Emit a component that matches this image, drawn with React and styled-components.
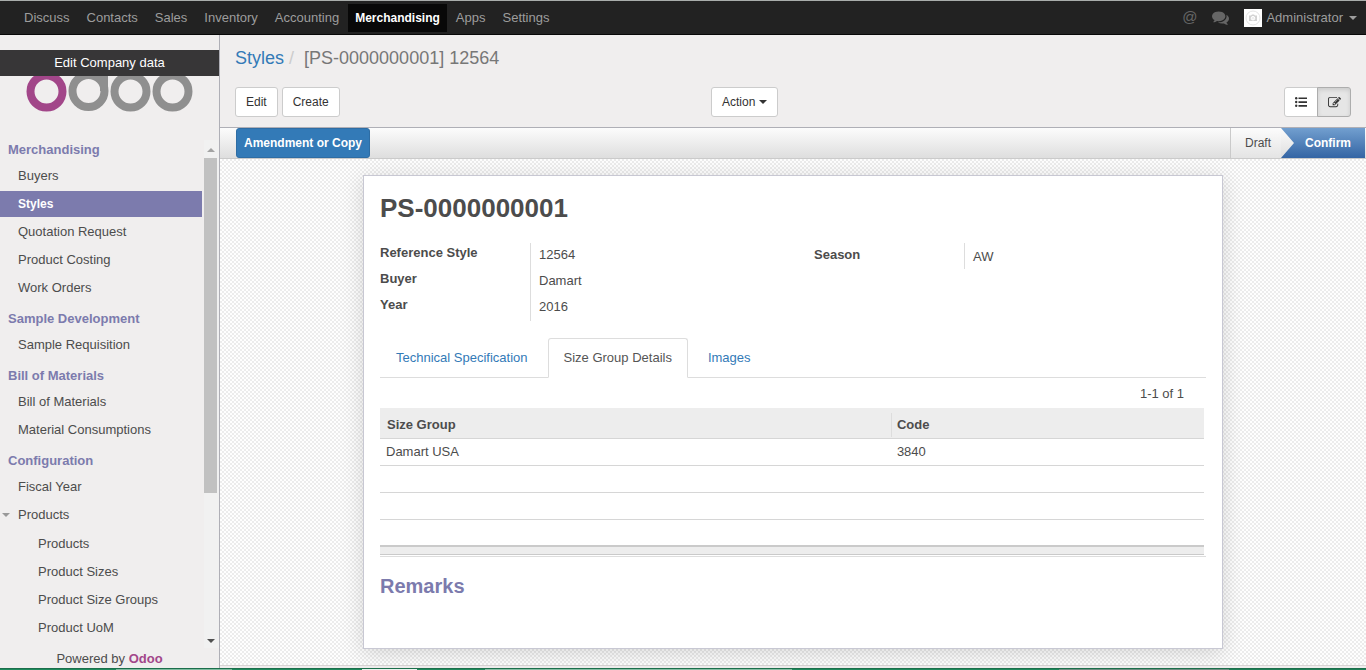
import React from "react";
import styled, { createGlobalStyle } from "styled-components";

const Global = createGlobalStyle`
  * { box-sizing: border-box; }
  body { margin: 0; background: #f0eeee; color: #4c4c4c; font: 13px/18px "Liberation Sans", Arial, sans-serif; }
  button { font: inherit; color: inherit; cursor: pointer; }
  a { color: inherit; text-decoration: none; }
  ul { list-style: none; margin: 0; padding: 0; }
`;

const Page = styled.div`display: flex; flex-direction: column; min-height: 100vh;`;

const TopBar = styled.header`
  display: flex; justify-content: space-between; height: 35px; padding: 1px 9px 0 16px;
  background: #222; border-top: 1px solid #a9adab; border-bottom: 1px solid #080808;
`;
const Menu = styled.nav`display: flex; align-items: center; gap: 1px;`;
const MenuLink = styled.a`
  height: 28px; line-height: 28px; padding: 0 ${(p) => (p.$active ? 7 : 8)}px;
  color: ${(p) => (p.$active ? "#fff" : "#9d9d9d")};
  background: ${(p) => (p.$active ? "#080808" : "transparent")};
  font-weight: ${(p) => (p.$active ? "bold" : "normal")};
  font-size: ${(p) => (p.$active ? 12 : 13)}px;
`;
const UserArea = styled.div`display: flex; align-items: center; color: #9d9d9d;`;
const TopIcon = styled.button`
  display: flex; margin: 0 15px 2px 0; padding: 0; border: 0; background: none; color: #666; font-size: 15px; line-height: 16px;
`;
const UserButton = styled.button`display: flex; align-items: center; gap: 4px; padding: 0; border: 0; background: none;`;
const Caret = styled.span`
  width: 0; height: 0; border: 4px solid transparent; border-top-color: currentColor; border-bottom: 0;
  margin-left: ${(p) => p.$gap || 0}px;
`;

const Body = styled.div`display: flex; flex: 1;`;
const Sidebar = styled.aside`
  width: 220px; flex-shrink: 0; display: flex; flex-direction: column; border-right: 1px solid #afafb6;
`;
const Company = styled.div`display: flex; flex-direction: column; padding-top: 15px; height: 105px;`;
const CompanyLink = styled.a`
  height: 26px; line-height: 26px; text-align: center; color: #fff; background: #373637;
`;
const Logo = styled.svg`display: block; width: 168px; height: 36px; margin-left: 26px;`;
const SideScroll = styled.div`display: flex; flex: 1;`;
const SideMenu = styled.nav`flex: 1; margin-right: 2px;`;
const Section = styled.h4`
  margin: 0; padding: 0 8px; height: 22px; line-height: 20px; font-size: 13px; color: #7c7bad;
`;
const Items = styled.ul`
  display: flex; flex-direction: column; gap: 2px; padding: 1px 0 ${(p) => (p.$last ? 0 : 8)}px;
`;
const ItemLink = styled.a`
  display: flex; align-items: center; height: 26px; padding-left: ${(p) => (p.$nested ? 38 : 18)}px;
  color: ${(p) => (p.$active ? "#fff" : "#4c4c4c")};
  background: ${(p) => (p.$active ? "#7c7bad" : "transparent")};
  font-weight: ${(p) => (p.$active ? "bold" : "normal")};
  font-size: ${(p) => (p.$active ? 12 : 13)}px;
`;
const ParentLink = styled(ItemLink)`
  padding-left: 2px; gap: 8px; color: #4c4c4c; margin-bottom: 1px;
  ${Caret} { color: #999; }
`;
const Scrollbar = styled.div`
  width: 15px; padding-right: 2px; display: flex; flex-direction: column; align-items: center; background: #f1f1f1;
`;
const Arrow = styled.span`
  width: 0; height: 0; margin: ${(p) => (p.$up ? "8px 0 6px" : "auto 0 5px")}; border: 4px solid transparent;
  ${(p) => (p.$up ? "border-top: 0; border-bottom-color: #a3a3a3;" : "border-bottom: 0; border-top-color: #505050;")}
`;
const Thumb = styled.div`width: 100%; height: 335px; background: #c1c1c1;`;
const Powered = styled.footer`
  height: 19px; text-align: center; line-height: 20px; margin-top: 1px;
  a { color: #a24689; font-weight: bold; }
`;

const Main = styled.main`flex: 1; min-width: 0; display: flex; flex-direction: column;`;
const ControlPanel = styled.div`padding: 11px 15px 10px; border-bottom: 1px solid #afafb6;`;
const Crumbs = styled.h1`
  display: flex; margin: 0 0 17px; font-size: 18px; line-height: 24px; font-weight: normal; color: #777;
  a { color: #337ab7; }
  span { color: #ccc; padding: 0 10px 0 5px; }
`;
const Controls = styled.div`display: grid; grid-template-columns: 476px auto 1fr; align-items: center;`;
const ButtonRow = styled.div`
  display: flex; gap: ${(p) => (p.$joined ? 0 : 4)}px;
  justify-content: ${(p) => (p.$end ? "flex-end" : "flex-start")};
`;
const Button = styled.button`
  display: flex; align-items: center; height: 30px; padding: 0 10px; font-size: 12px;
  color: #333; background: #fff; border: 1px solid #ccc; border-radius: 3px;
`;
const ViewButton = styled(Button)`
  width: 34px; justify-content: center; padding: 0;
  ${(p) => (p.$active
    ? "background: #e6e6e6; border-color: #adadad; border-radius: 0 3px 3px 0; box-shadow: inset 0 2px 4px rgba(0,0,0,.12); margin-left: -1px;"
    : "border-radius: 3px 0 0 3px;")}
`;

const StatusBar = styled.div`
  display: flex; justify-content: space-between; height: 31px; padding: 0 1px 0 16px;
  border-bottom: 1px solid #cacaca; background: linear-gradient(#fcfcfc, #dedede);
`;
const Primary = styled.button`
  height: 30px; padding: 0 7px; font-size: 12px; font-weight: bold; color: #fff;
  background: #337ab7; border: 1px solid #2e6da4; border-radius: 3px;
`;
const Steps = styled.ol`display: flex; margin: 0; padding: 0; list-style: none;`;
const Step = styled.li`
  display: flex; align-items: center; font-size: 12px; line-height: 28px;
  ${(p) => (p.$active
    ? "color: #fff; font-weight: bold; padding: 0 14px 0 24px; background: linear-gradient(#729fcf, #3465a4); clip-path: polygon(0 0, 100% 0, 100% 100%, 0 100%, 13px 50%);"
    : "padding: 0 10px 0 14px; border-left: 1px solid #cacaca; background: linear-gradient(#fcfcfc, #e4e4e4);")}
`;

const Canvas = styled.div`
  flex: 1; padding: 16px 143px; border-bottom: 1px solid #d8d4d4; margin-bottom: 2px;
  background: repeating-conic-gradient(#ececec 0 25%, #fefefe 0 50%) 0 0 / 4px 4px;
`;
const Sheet = styled.article`
  min-height: 474px; padding: 16px; background: #fff; border: 1px solid #c8c8d3;
  box-shadow: 0 4px 20px rgba(0, 0, 0, .15);
`;
const Title = styled.h2`margin: 0 0 19px; font-size: 26px; line-height: 32px;`;
const Groups = styled.div`display: grid; grid-template-columns: 434px 1fr; align-items: start; margin-bottom: 17px;`;
const Fields = styled.dl`display: grid; grid-template-columns: 150px 1fr; margin: 0;`;
const Label = styled.dt`height: 26px; line-height: 20px; font-weight: bold; padding-top: ${(p) => p.$top || 0}px;`;
const Value = styled.dd`
  margin: 0; height: 26px; line-height: 22px; padding: ${(p) => p.$top || 1}px 0 0 8px; border-left: 1px solid #ddd;
`;

const Tabs = styled.div`display: flex; gap: 4px; border-bottom: 1px solid #ddd;`;
const Tab = styled.button`
  height: 40px; padding: 0 15px; margin: 0 0 -1px; color: #337ab7; background: none;
  border: 1px solid transparent; border-radius: 3px 3px 0 0;
  ${(p) => p.$active && "color: #555; background: #fff; border-color: #ddd #ddd #fff;"}
`;
const Pager = styled.div`text-align: right; padding: 7px 20px 5px 0;`;
const Panel = styled.section`padding: 0 2px 1px 0; border-bottom: 1px solid #ddd;`;
const Table = styled.table`
  width: 100%; border-collapse: collapse; table-layout: fixed;
  col:first-child { width: 62%; }
  th { height: 30px; padding: 4px 7px 0; text-align: left; border-bottom: 1px solid #d6d6d6; }
  th + th { padding: 4px 0 0; }
  thead { background: #ededed; }
  td { height: 27px; padding: 0 6px; border-bottom: 1px solid #d6d6d6; }
  tbody tr:last-child td { border-bottom: 2px solid #cacaca; }
  tfoot td { height: 8px; background: #ededed; border-bottom-color: #cacaca; }
`;
const HeadCell = styled.span`
  display: block; height: 24px; line-height: 24px; padding-left: 5px; border-left: 1px solid #ddd;
`;
const Remarks = styled.h3`margin: 16px 0 0; font-size: 20px; line-height: 26px; color: #7c7bad;`;
const Strip = styled.div`
  height: 2px; border-top: 1px solid #1c6e4b;
  background: linear-gradient(90deg,
    #1e8a5c 0 8.5%, #7dbb9f 0 17%, #1e8a5c 0 26.5%, #e8f3ee 0 30.5%, #1e8a5c 0 35.5%,
    #86bfa5 0 58%, #1e8a5c 0 77.5%, #6f8d82 0 90%, #1e7f56 0);
`;

const menu = ["Discuss", "Contacts", "Sales", "Inventory", "Accounting", "Merchandising", "Apps", "Settings"];
const sections = [
  { title: "Merchandising", items: ["Buyers", "Styles", "Quotation Request", "Product Costing", "Work Orders"] },
  { title: "Sample Development", items: ["Sample Requisition"] },
  { title: "Bill of Materials", items: ["Bill of Materials", "Material Consumptions"] },
];
const productItems = ["Products", "Product Sizes", "Product Size Groups", "Product UoM"];
const details = [["Reference Style", "12564"], ["Buyer", "Damart"], ["Year", "2016"]];

const CommentsIcon = () => (
  <svg width="17" height="17" viewBox="0 0 1792 1792" fill="currentColor" aria-hidden="true">
    <path d="M1408 768q0 139-94 257t-256.500 186.500-353.500 68.500q-86 0-176-16-124 88-278 128-36 9-86 16h-3q-11 0-20.500-8t-11.500-21q-1-3-1-6.500t.5-6.500 2-6l2.500-5 3.500-5.500 4-5 4.500-5 4-4.500q5-6 23-25t26-29.500 22.500-29 25-38.500 20.500-44q-124-72-195-177t-71-224q0-139 94-257t256.500-186.500 353.500-68.500 353.500 68.500 256.500 186.500 94 257zm384 256q0 120-71 224.500t-195 176.500q10 24 20.500 44t25 38.500 22.500 29 26 29.500 23 25q1 1 4 4.500t4.500 5 4 5 3.500 5.500l2.500 5 2 6 .5 6.500-1 6.500q-3 14-13 22t-22 7q-50-7-86-16-154-40-278-128-90 16-176 16-271 0-472-132 58 4 88 4 161 0 309-45t264-129q125-92 192-212t67-254q0-77-23-152 129 71 204 178t75 230z" />
  </svg>
);
const EditIcon = () => (
  <svg width="13" height="13" viewBox="0 0 1792 1792" fill="currentColor" aria-hidden="true">
    <path d="M888 1184l116-116-152-152-116 116v56h96v96h56zm440-720q-16-16-33 1l-350 350q-17 17-1 33t33-1l350-350q17-17 1-33zm80 594v190q0 119-84.500 203.500t-203.500 84.500h-832q-119 0-203.500-84.500t-84.500-203.500v-832q0-119 84.500-203.500t203.500-84.500h832q63 0 117 25 15 7 18 23 3 17-9 29l-49 49q-14 14-32 8-23-6-45-6h-832q-66 0-113 47t-47 113v832q0 66 47 113t113 47h832q66 0 113-47t47-113v-126q0-13 9-22l64-64q15-15 35-7t20 29zm-96-738l288 288-672 672h-288v-288zm444 132l-92 92-288-288 92-92q28-28 68-28t68 28l152 152q28 28 28 68t-28 68z" />
  </svg>
);
const ListIcon = () => (
  <svg width="12" height="10" viewBox="0 0 12 10" fill="currentColor" aria-hidden="true">
    <circle cx="1.200" cy="1.200" r="1.200" /><circle cx="1.200" cy="5" r="1.200" /><circle cx="1.200" cy="8.800" r="1.200" />
    <path d="M3.500 .4h8.500v1.700h-8.500zM3.500 4.200h8.500v1.700h-8.500zM3.500 8h8.500v1.700h-8.500z" />
  </svg>
);
const Avatar = () => (
  <svg width="18" height="18" viewBox="0 0 18 18" fill="none" aria-hidden="true">
    <rect width="18" height="18" fill="#fff" />
    <circle cx="9" cy="9" r="7" stroke="#e4e4e4" />
    <path d="M5 6.500h2l1-1h2l1 1h2v5.500h-8z" fill="#d2d2d2" />
    <circle cx="9" cy="9.200" r="1.800" fill="#eee" stroke="#fff" />
  </svg>
);

export default function App() {
  return (
    <Page>
      <Global />
      <TopBar>
        <Menu>
          {menu.map((m) => <MenuLink key={m} href="#" $active={m === "Merchandising"}>{m}</MenuLink>)}
        </Menu>
        <UserArea>
          <TopIcon aria-label="Mentions">@</TopIcon>
          <TopIcon aria-label="Conversations"><CommentsIcon /></TopIcon>
          <UserButton><Avatar />Administrator<Caret $gap={2} /></UserButton>
        </UserArea>
      </TopBar>
      <Body>
        <Sidebar>
          <Company>
            <CompanyLink href="#">Edit Company data</CompanyLink>
            <Logo viewBox="26 76 168 36" fill="none" strokeWidth="8" role="img" aria-label="odoo">
              <circle cx="46.500" cy="91.500" r="16" stroke="#a24689" />
              <g stroke="#8f8f8f">
                <circle cx="88.500" cy="91" r="16" />
                <path d="M104 70v21" />
                <circle cx="130.500" cy="91.500" r="16" />
                <circle cx="172.500" cy="91.500" r="16" />
              </g>
            </Logo>
          </Company>
          <SideScroll>
            <SideMenu>
              {sections.map((s) => (
                <React.Fragment key={s.title}>
                  <Section>{s.title}</Section>
                  <Items>
                    {s.items.map((i) => <li key={i}><ItemLink href="#" $active={i === "Styles"}>{i}</ItemLink></li>)}
                  </Items>
                </React.Fragment>
              ))}
              <Section>Configuration</Section>
              <Items $last>
                <li><ItemLink href="#">Fiscal Year</ItemLink></li>
                <li>
                  <ParentLink href="#"><Caret />Products</ParentLink>
                </li>
                {productItems.map((i) => <li key={i}><ItemLink href="#" $nested>{i}</ItemLink></li>)}
              </Items>
            </SideMenu>
            <Scrollbar><Arrow $up /><Thumb /><Arrow /></Scrollbar>
          </SideScroll>
          <Powered>Powered by <a href="#">Odoo</a></Powered>
        </Sidebar>
        <Main>
          <ControlPanel>
            <Crumbs><a href="#">Styles</a><span>/</span>[PS-0000000001] 12564</Crumbs>
            <Controls>
              <ButtonRow><Button>Edit</Button><Button>Create</Button></ButtonRow>
              <Button>Action<Caret $gap={4} /></Button>
              <ButtonRow $joined $end>
                <ViewButton aria-label="List view"><ListIcon /></ViewButton>
                <ViewButton $active aria-label="Form view"><EditIcon /></ViewButton>
              </ButtonRow>
            </Controls>
          </ControlPanel>
          <StatusBar>
            <Primary>Amendment or Copy</Primary>
            <Steps><Step>Draft</Step><Step $active>Confirm</Step></Steps>
          </StatusBar>
          <Canvas>
            <Sheet>
              <Title>PS-0000000001</Title>
              <Groups>
                <Fields>
                  {details.map(([k, v]) => <React.Fragment key={k}><Label>{k}</Label><Value>{v}</Value></React.Fragment>)}
                </Fields>
                <Fields><Label $top={2}>Season</Label><Value $top={3}>AW</Value></Fields>
              </Groups>
              <Tabs role="tablist">
                <Tab role="tab">Technical Specification</Tab>
                <Tab role="tab" $active aria-selected="true">Size Group Details</Tab>
                <Tab role="tab">Images</Tab>
              </Tabs>
              <Panel>
                <Pager>1-1 of 1</Pager>
                <Table>
                  <colgroup><col /><col /></colgroup>
                  <thead><tr><th>Size Group</th><th><HeadCell>Code</HeadCell></th></tr></thead>
                  <tbody>
                    <tr><td>Damart USA</td><td>3840</td></tr>
                    <tr><td /><td /></tr>
                    <tr><td /><td /></tr>
                    <tr><td /><td /></tr>
                  </tbody>
                  <tfoot><tr><td colSpan={2} /></tr></tfoot>
                </Table>
              </Panel>
              <Remarks>Remarks</Remarks>
            </Sheet>
          </Canvas>
        </Main>
      </Body>
      <Strip />
    </Page>
  );
}
